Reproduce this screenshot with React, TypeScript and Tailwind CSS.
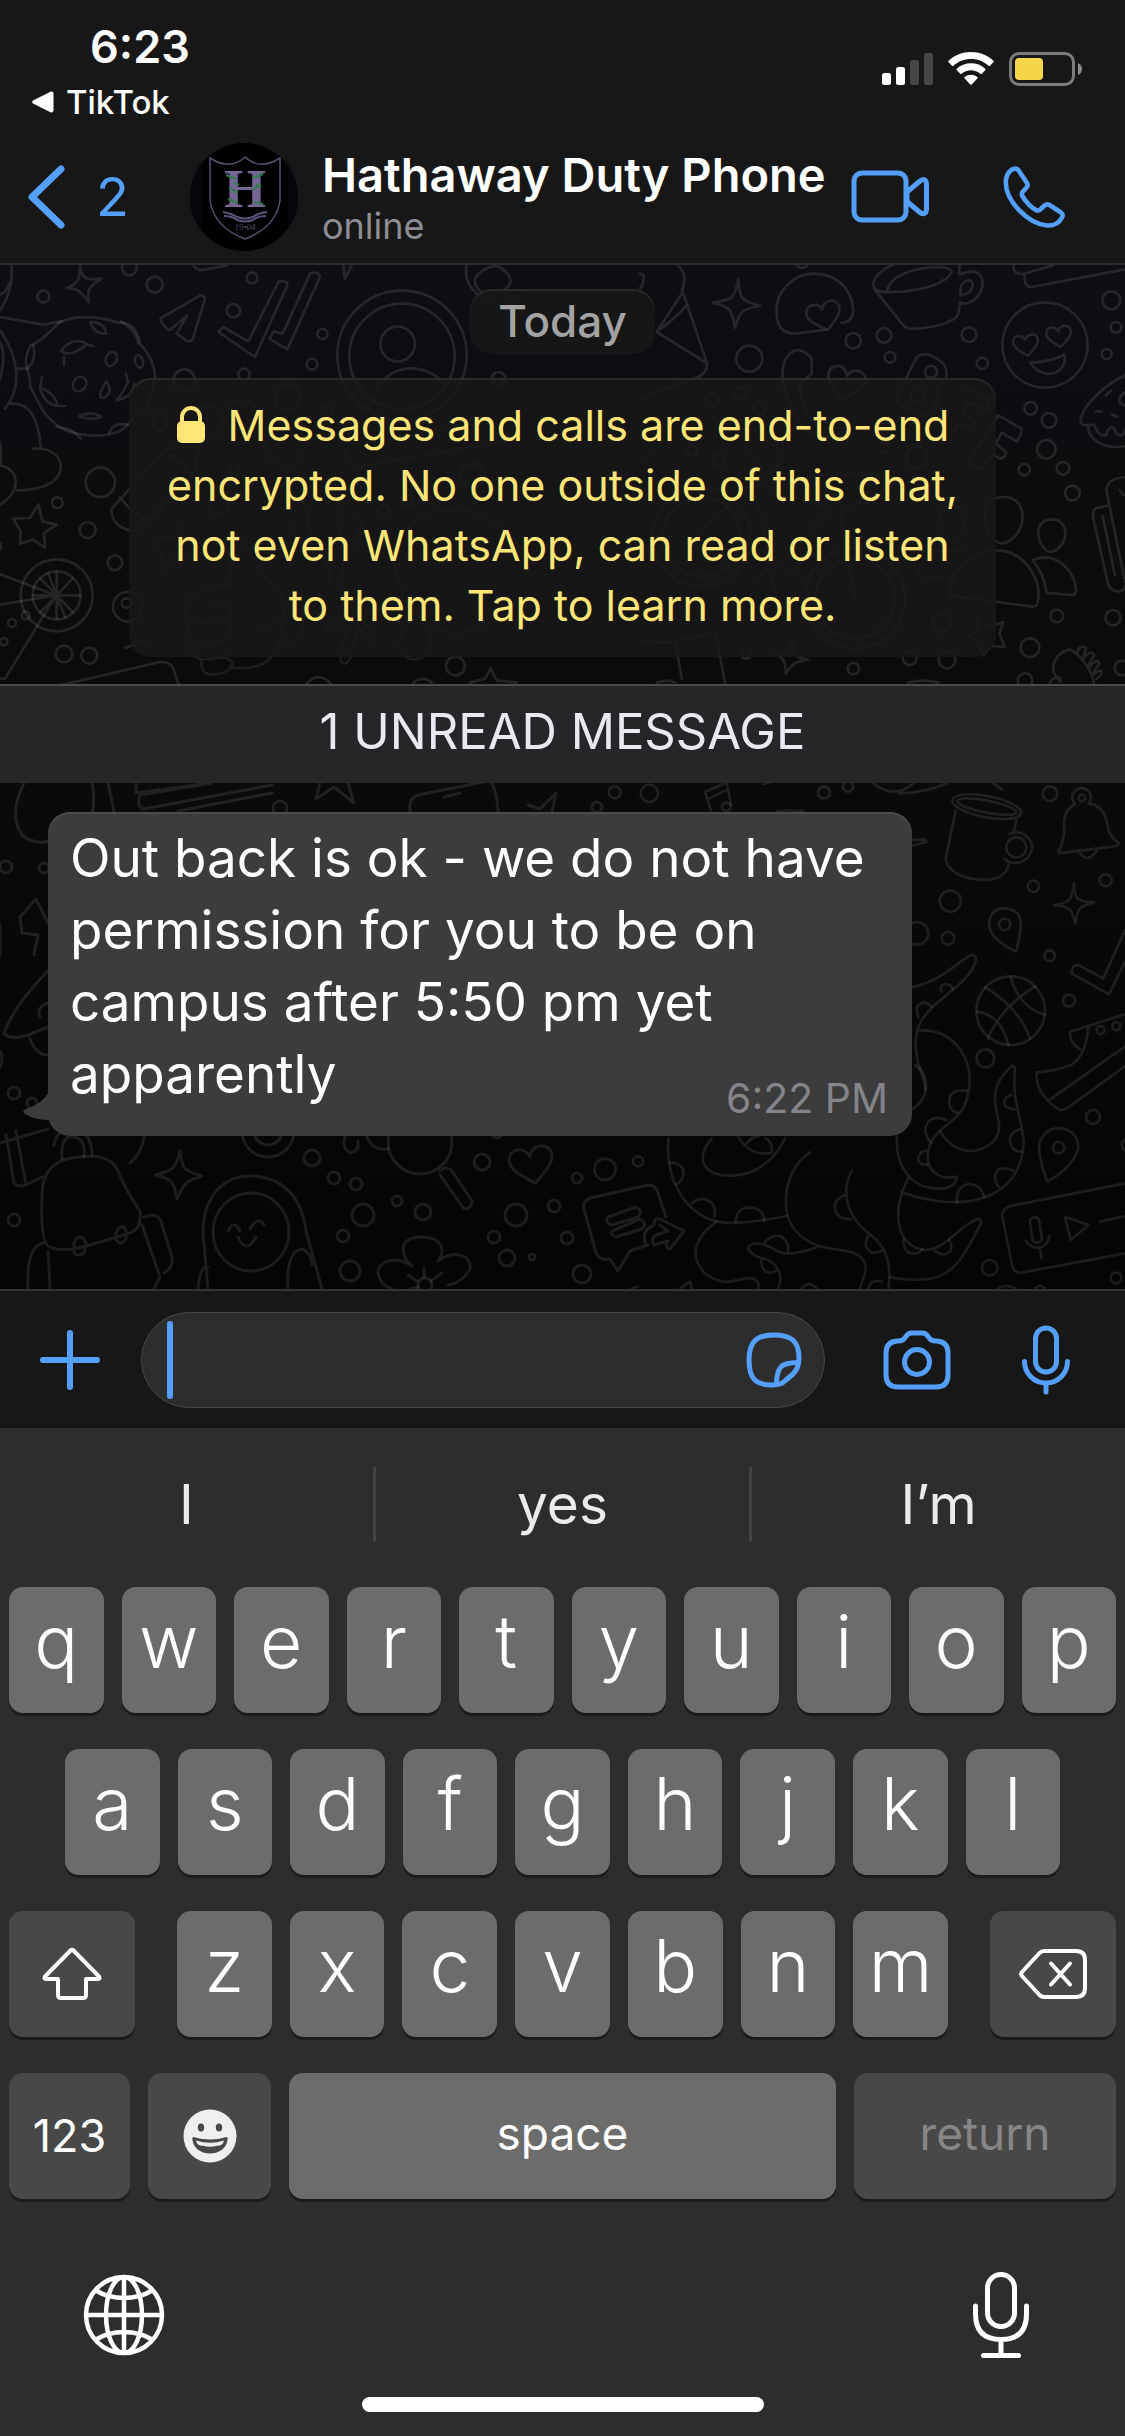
import React from "react";
import type { ReactNode } from "react";

type Ring = [number, number, number];

const ringsTopLeft: Ring[] = [
  [130, 104, 18], [388, 18, 22], [464, 68, 24], [756, 48, 16], [700, 146, 20], [967, 216, 15],
  [936, 307, 16], [732, 337, 17], [553, 354, 32], [862, 406, 38], [301, 661, 44], [172, 722, 16],
  [263, 804, 24], [345, 902, 22], [383, 1034, 44], [379, 1023, 14], [192, 1176, 25], [268, 1181, 24],
  [77, 1060, 12], [36, 1083, 12], [11, 1139, 11], [1366, 1212, 28], [480, 483, 24], [982, 446, 16],
  [1496, 350, 20], [702, 622, 15], [658, 728, 30], [1150, 745, 18], [-10, 853, 14], [1224, 716, 16],
  [1418, 640, 36], [1206, 280, 194], [1206, 283, 158], [1193, 246, 52], [170, 1000, 108], [170, 1000, 72],
];

const ringsTopRight: Ring[] = [
  [640, 236, 23], [732, 220, 22], [750, 286, 16], [987, 218, 22], [1027, 304, 17], [328, 290, 39],
  [1414, 115, 27], [1428, 196, 16], [1400, 276, 15], [1172, 439, 19], [1227, 475, 22], [1219, 562, 28],
  [1153, 623, 17], [1269, 619, 19], [1297, 693, 22], [1250, 1062, 19], [1419, 1067, 23], [1170, 1157, 28],
  [1155, 1255, 22], [1446, 1218, 22], [921, 1194, 25], [809, 1188, 21], [640, 1220, 17], [873, 330, 18],
  [834, 400, 22], [217, 411, 19], [301, 394, 16], [357, 441, 18], [157, 566, 15], [238, 592, 19],
  [733, 556, 15], [830, 585, 32], [905, 1083, 28], [318, 1174, 16], [185, 825, 148], [185, 825, 118],
  [645, 1010, 150], [645, 1010, 120], [1215, 249, 128], [486, 0, 18],
];

const ringsBottomRight: Ring[] = [
  [29, 37, 18], [133, 40, 26], [657, 38, 18], [729, 20, 15], [1335, 41, 22], [1431, 54, 10],
  [1285, 319, 17], [1502, 301, 18], [1036, 363, 32], [936, 460, 34], [1029, 475, 19], [1199, 433, 17],
  [1334, 527, 16], [1392, 662, 18], [1141, 835, 27], [1464, 1011, 21], [1361, 1103, 17], [99, 1144, 15],
  [0, 1168, 32], [1154, 1463, 23], [1533, 1494, 16], [1234, 202, 30], [1217, 692, 103], [1487, 750, 12],
  [1534, 738, 12], [1570, 1095, 20],
];

const ringsBottomLeft: Ring[] = [
  [280, 543, 7], [6, 602, 6], [44, 603, 5], [14, 828, 6], [32, 838, 5], [14, 955, 6], [312, 893, 8],
  [334, 913, 6], [356, 919, 6], [397, 936, 5], [363, 950, 11], [423, 947, 8], [343, 971, 6], [350, 1006, 10],
  [482, 897, 8], [577, 913, 5], [554, 941, 6], [516, 950, 11], [494, 972, 6], [567, 973, 6], [507, 993, 8],
  [532, 992, 3], [582, 1009, 9], [420, 877, 32], [268, 866, 26], [268, 866, 14], [597, 542, 5],
];

function Rings({ items }: { items: Ring[] }) {
  return (
    <>
      {items.map(([x, y, r]) => (
        <circle key={`${x}-${y}-${r}`} cx={x} cy={y} r={r} />
      ))}
    </>
  );
}

const HEART = "M0 44C-18 30 -52 8 -50 -16C-46 -44 -10 -44 -2 -18C8 -46 46 -42 48 -16C50 8 18 28 0 44Z";

function Wallpaper() {
  return (
    <svg
      aria-hidden="true"
      viewBox="0 0 1125 1024"
      preserveAspectRatio="xMidYMin slice"
      className="pointer-events-none absolute inset-0 h-full w-full"
      fill="none"
      stroke="#ffffff"
      strokeOpacity="0.105"
      strokeLinecap="round"
      strokeLinejoin="round"
    >
      <g transform="translate(0 -3) scale(.33333)" strokeWidth="8">
        <Rings items={ringsTopLeft} />
        <path d="M240 8C245 50 255 55 305 50C265 75 262 80 265 120C240 85 235 82 200 78C235 65 240 55 240 8Z" />
        <path d="M92 250C130 235 140 215 180 180C240 155 300 165 355 182C400 180 415 210 420 245C450 280 465 310 465 345C455 400 450 455 400 460C385 500 350 525 270 520C190 515 170 490 150 470C120 450 110 400 90 375C95 340 75 320 78 290C80 265 95 250 92 250Z" />
        <path d="M183 265Q210 230 250 240Q262 250 280 252M183 265Q200 285 240 262L258 250M192 310V285" />
        <path d="M270 180Q315 180 318 215Q285 218 270 180ZM362 178Q410 205 415 245M100 250Q110 290 85 318M120 375Q170 400 172 432Q130 425 120 375ZM172 432L195 432M120 375L126 345M170 495Q215 495 242 530M328 512Q340 480 384 488M238 462Q275 445 304 464Q270 478 238 462ZM378 335L384 360Q365 400 350 415Q400 405 402 365" />
        <ellipse cx="334" cy="291" rx="16" ry="22" transform="rotate(25 334 291)" />
        <ellipse cx="239" cy="366" rx="19" ry="23" transform="rotate(35 239 366)" />
        <ellipse cx="417" cy="298" rx="12" ry="19" transform="rotate(-15 417 298)" />
        <path d="M318 358Q340 385 318 404Q295 415 302 390Z" />
        <path d="M483 168L600 101Q615 98 614 114L578 232Q572 242 560 236L530 215L562 160L512 203Q500 205 485 180Q480 172 483 168Z" />
        <path d="M655 210L670 195L745 238L835 60Q862 52 862 70L765 285Z" />
        <path d="M808 230L822 208L848 215L930 35Q955 25 960 45L862 262Z" />
        <path d="M1122 415C1150 290 1290 300 1335 372M1030 8L1035 50L1056 8M580 8Q590 30 620 22L680 10" />
        <path d="M1400 10Q1390 60 1430 95L1490 130L1560 100M1425 50Q1440 20 1490 10Q1540 40 1530 65Q1500 110 1450 95Q1420 75 1425 50Z" />
        <path d="M115 727L127 778L170 788L132 813L135 856L98 833L60 845L62 808L40 770L90 768Z" />
        <path d="M170 930V1070M100 1000H240M122 950L218 1050M218 950L122 1050M145 935L195 1065M0 937L168 1000L0 1028M165 1005L15 1250H0" />
        <path d="M0 165L130 188L185 178M0 205C60 290 65 380 15 440M50 320H80M0 240Q20 280 0 350M30 425C90 420 115 470 122 555M98 560C160 555 185 590 182 620C175 670 110 685 50 685M0 610C60 620 65 690 0 728M0 540Q5 580 0 610M35 8Q40 90 0 145M30 60Q20 90 0 98" />
        <path d="M335 740L500 560L598 552L580 640L410 805C370 810 330 780 335 740ZM360 705Q400 760 440 775M500 570Q520 600 550 600Q560 640 580 640" />
        <path d="M375 1158L445 1133M395 1085L410 1145M180 1270L480 1200Q510 1198 520 1220L535 1265M920 1265Q955 1225 992 1265M1240 1262Q1270 1240 1296 1262M1410 1262L1455 1250L1472 1220L1490 1255L1550 1262" />
        <g strokeOpacity="0.07">
          <path d="M560 1080C550 1000 570 980 695 968C705 900 650 830 700 815C740 820 760 930 840 985C860 1050 850 1180 780 1210Q730 1225 690 1215M605 1195Q600 1240 640 1238Q700 1230 697 1200Q680 1180 640 1190M625 1028H675Q700 1045 685 1070Q660 1085 570 1078Q550 1110 580 1140Q640 1150 685 1130Q700 1100 680 1078M575 1145Q565 1180 600 1192Q660 1195 685 1165M850 1150Q920 1150 910 1060M760 1100Q810 1095 840 1060" />
          <path d="M920 740Q920 850 985 850Q1040 830 1020 740M1055 760Q1080 740 1082 780Q1070 880 1030 900L1025 960Q1010 980 990 960L980 890Q920 880 875 800Q880 780 895 790" />
          <path d="M1190 940C1150 850 1240 740 1350 745C1420 730 1540 800 1560 860M1190 940C1210 1030 1240 1060 1300 1100Q1400 1130 1480 1080M1380 900Q1400 830 1480 830M1240 1070Q1190 1120 1200 1160Q1230 1220 1290 1170Q1300 1130 1280 1100M980 1090L1060 1040L1130 1130Q1130 1150 1105 1140L1075 1090L1050 1190Q1030 1220 1020 1190L1040 1100L980 1110Z" />
          <path d="M800 540Q780 590 870 620Q930 560 920 520M1040 560Q1030 600 1070 615L1560 530M1060 550L1440 480M470 830L520 825L545 790L540 850L570 890L520 890L490 930L485 880L455 850Z" />
          <path d="M595 440Q650 410 670 470Q670 520 620 540M680 430Q740 390 780 450" />
        </g>
      </g>

      <g transform="translate(640 -3) scale(.33333)" strokeWidth="8">
        <Rings items={ringsTopRight} />
        <path d="M295 52C300 110 300 115 360 132C310 140 300 145 285 197C275 145 275 135 218 122C275 115 285 110 295 52Z" />
        <path d="M604 183Q640 180 640 145C635 70 580 35 520 35C460 35 405 90 410 150C410 190 425 215 465 215L555 204" />
        <path d={HEART} transform="translate(553 160) rotate(-14) scale(1.03)" />
        <path d="M700 65C700 40 740 15 760 8M700 65Q700 95 760 90C830 88 915 70 935 30Q930 15 890 15C820 18 750 40 742 85M702 80L790 190Q800 202 830 200C890 195 945 180 955 155L960 120M958 35V10M960 38C1030 5 1045 70 1010 105Q990 130 960 122M962 100V75C970 55 1000 45 998 70Q995 95 962 100Z" />
        <path d="M50 210L125 95Q145 35 115 12M50 210L195 300M125 80L200 300Q205 330 175 345L0 410M50 210Q130 150 142 125M0 80Q15 60 10 40L0 35" />
        <path d="M515 290Q490 260 465 265C420 285 420 350 440 400C460 470 520 560 600 510M515 290V335L480 365Q475 420 520 480" />
        <path d={HEART} transform="translate(618 362) rotate(14) scale(1.15)" />
        <path d="M830 285Q855 265 890 290C930 310 930 365 890 372C910 420 870 460 840 460L775 425Q765 415 770 405Z" />
        <path d="M970 370L1048 415Q1050 430 1038 445L985 420L970 450L1005 475L990 500L955 485L940 515" />
        <path d="M1075 460L1145 500Q1145 520 1130 538L1085 512L1068 545L1098 570Q1100 585 1080 590L1055 575L1025 620Q1000 620 985 600Z" />
        <path d={HEART} transform="translate(1159 248) rotate(-8) scale(.76)" strokeWidth="10" />
        <path d={HEART} transform="translate(1258 222) rotate(-8) scale(.76)" strokeWidth="10" />
        <path d="M1170 302C1200 302 1250 292 1273 277C1280 310 1260 335 1222 336Q1190 330 1170 302Z" />
        <path d="M1120 8Q1120 40 1150 36L1240 10M1155 40Q1150 77 1175 75L1455 22" />
        <path d="M1455 340C1390 370 1320 440 1322 480Q1325 495 1362 488Q1375 525 1398 520Q1412 475 1430 515Q1445 530 1455 505M1345 495C1345 530 1390 565 1455 552M1398 400L1412 386M1367 448H1384M1416 458L1432 464M1455 390Q1420 420 1455 430" />
        <path d="M1455 645Q1395 650 1400 690L1455 960M1408 730L1370 738Q1355 745 1360 770L1405 970Q1415 990 1440 988Q1455 985 1455 970M1388 762L1425 940M1440 685L1450 700" />
        <path d="M1148 765C1145 720 1120 705 1090 705C1050 705 1030 730 1033 765C1040 820 1070 844 1085 844C1110 844 1148 810 1148 765Z" />
        <path d="M1276 810C1272 780 1255 772 1235 772C1210 772 1194 790 1194 815C1198 850 1220 870 1232 870C1250 868 1278 845 1276 810Z" />
        <path d="M930 1000Q920 970 950 930C1030 840 1120 850 1170 920Q1205 970 1192 1025Q1188 1036 1175 1034Z" />
        <path d="M1178 895Q1210 880 1240 890C1290 910 1310 960 1308 990Q1305 1000 1290 999L1220 992Q1210 930 1178 895Z" />
        <path d="M1010 1060L1040 1098L1090 1080L1078 1115L1095 1155L1055 1152L1030 1180L1015 1140L985 1125L1015 1110Z" />
        <path d="M1262 1260Q1235 1235 1240 1210Q1250 1170 1290 1162Q1345 1195 1362 1262M1310 1175Q1320 1145 1338 1158L1330 1185M1330 1192Q1350 1160 1363 1180L1345 1210M1350 1215Q1370 1185 1378 1205L1358 1235M1362 1238Q1385 1215 1385 1235L1370 1252M1230 1262Q1240 1240 1262 1250" />
        <path d="M462 1130C455 1175 460 1185 503 1193C465 1200 455 1205 438 1235C435 1200 435 1190 400 1172C440 1175 450 1165 462 1130Z" />
        <path d="M0 1140L95 1142L210 1112Q225 1112 230 1130L255 1262M107 1142L125 1250M50 1262Q80 1250 105 1262M805 1262Q850 1250 895 1262" />
        <g strokeOpacity="0.07">
          <path d="M0 600L65 550M310 540Q320 590 350 590M370 530L440 580L340 690L400 900M180 810L340 660L570 740L430 900M600 720L520 640L700 635Q760 660 720 690L600 750L645 1010M895 780Q895 730 940 730Q985 740 975 780Q960 830 935 830Q900 820 895 780ZM830 940Q850 850 970 865M830 940L910 950M340 960L380 920L410 990M400 900Q470 960 480 900" />
        </g>
      </g>

      <g transform="translate(605 515) scale(.33333)" strokeWidth="8" strokeOpacity="0.095">
        <Rings items={ringsBottomRight} />
        <path d="M318 92L300 35L365 8L378 75M308 58L368 28" />
        <ellipse cx="364" cy="80" rx="13" ry="12" />
        <path d="M475 12L500 5M805 10Q870 60 925 10M880 40Q960 40 1025 10M1165 10L1192 28M515 95Q550 88 595 95M920 180L960 178L965 185L920 198" />
        <ellipse cx="1145" cy="80" rx="105" ry="32" transform="rotate(11 1145 80)" />
        <ellipse cx="1145" cy="80" rx="90" ry="18" transform="rotate(11 1145 80)" />
        <path d="M1052 92L1022 235C1030 290 1110 305 1160 298C1200 290 1212 265 1212 245M1235 120L1225 160M1212 162C1250 145 1285 175 1280 210C1270 250 1225 258 1200 238" />
        <path d="M1410 72A28 28 0 1 1 1453 68M1410 72C1380 90 1375 115 1378 150Q1375 190 1360 215Q1365 222 1400 215L1505 202Q1545 200 1540 188Q1510 170 1507 130Q1495 75 1450 70M1425 220Q1450 250 1475 212" />
        <path d="M1407 310C1410 360 1412 362 1468 368C1418 380 1418 385 1411 432C1400 385 1398 382 1348 375C1395 368 1400 362 1407 310Z" />
        <path d="M1233 515Q1150 475 1152 430Q1155 385 1200 385Q1250 390 1247 435Q1245 470 1233 515Z" />
        <path d="M1560 450L1495 595L1420 555Q1400 555 1400 580L1512 643L1560 545" />
        <path d="M1140 622Q1240 680 1275 775M1217 590Q1240 680 1320 705M1292 618Q1190 680 1148 775M1115 695Q1190 705 1210 795" />
        <path d="M920 622C1020 600 1060 540 1100 525Q1118 525 1110 550C1080 630 950 670 935 760C920 850 970 900 960 940Q950 970 920 990M938 752C1050 740 1120 850 1085 960C1060 1040 970 1040 968 1130C968 1180 1010 1200 1055 1190Q1055 1215 1020 1225C920 1235 870 1160 876 1070" />
        <path d="M1005 1055C1040 1105 1080 1120 1120 1110C1170 1095 1190 1060 1180 1020C1170 970 1150 920 1220 858Q1230 855 1230 870C1220 970 1250 1000 1256 1090C1250 1200 1180 1240 1130 1255C1060 1280 950 1260 888 1235M910 1195C860 1290 870 1400 960 1410C1020 1410 1060 1340 1115 1318Q1130 1315 1128 1330C1090 1400 1060 1480 980 1495Q920 1505 855 1492" />
        <path d="M1010 635Q1000 610 1028 613Q1042 615 1043 628M940 712Q925 670 960 668Q975 672 980 680M930 855Q970 880 962 930M1085 932Q1030 925 1033 970Q1035 995 1058 998M1025 1020Q970 1000 960 1050Q965 1075 978 1088M962 1112Q940 1115 940 1140Q945 1155 968 1155M1218 945Q1195 955 1198 970Q1200 985 1228 988M1245 1047Q1210 1060 1215 1085Q1220 1115 1250 1115M1225 1172Q1170 1150 1170 1195Q1170 1210 1182 1220M1055 1265Q1055 1215 1095 1212Q1130 1215 1137 1252M895 1378Q895 1425 930 1420Q945 1420 952 1408M990 1412Q1020 1435 1038 1410Q1042 1395 1032 1380" />
        <path d="M190 1075C180 1220 260 1340 400 1328Q460 1325 545 1308M320 1075C260 1150 310 1190 385 1187C450 1185 510 1140 540 1075M400 1072C430 1120 470 1125 500 1118Q505 1085 480 1075M425 1090Q440 1070 460 1070" />
        <path d="M195 1148Q240 1150 235 1185Q230 1205 215 1212M262 1268Q290 1245 320 1268Q335 1290 328 1310M392 1325Q395 1282 435 1282Q475 1285 478 1322M614 1117C540 1170 520 1290 570 1350C630 1420 700 1400 750 1420Q790 1440 780 1480L765 1525M335 1325C270 1370 250 1430 300 1480C360 1530 400 1490 440 1495Q465 1500 460 1525M640 1400Q560 1430 520 1415C480 1390 440 1380 428 1405Q440 1430 490 1440Q540 1470 520 1525M475 1392Q500 1360 530 1370Q555 1390 548 1415M470 1438Q465 1475 495 1478Q510 1478 515 1470" />
        <path d="M740 1173C700 1250 740 1320 790 1360C850 1400 860 1460 850 1525M722 1245Q685 1255 690 1290Q700 1320 740 1318M790 1368Q770 1400 800 1418Q820 1420 836 1410M590 1525Q610 1500 635 1525M790 1525Q800 1495 830 1505M80 1525L98 1520M225 1525L255 1505L260 1525M1180 1525Q1205 1510 1230 1525M1290 1525Q1305 1510 1320 1525" />
        <path d="M1560 703L1395 755C1395 790 1415 800 1425 808M1450 742Q1440 840 1390 858Q1340 875 1295 877C1290 930 1330 970 1365 990Q1380 992 1400 975L1560 858M1335 958L1560 800" />
        <path d="M1327 1205Q1295 1120 1305 1085Q1325 1040 1370 1045Q1420 1055 1420 1105Q1405 1160 1327 1205Z" />
        <path d="M1560 1210L1220 1277Q1190 1285 1192 1310L1222 1460Q1230 1480 1250 1478L1560 1420M1380 1310L1450 1335L1397 1380ZM1485 1325L1560 1308M1275 1325Q1275 1310 1292 1312Q1302 1315 1304 1330L1310 1370Q1312 1385 1298 1388Q1285 1388 1282 1375ZM1262 1382Q1275 1405 1305 1403Q1330 1395 1333 1368M1305 1405L1310 1435" />
      </g>

      <g strokeWidth="3" strokeOpacity="0.095">
        <Rings items={ringsBottomLeft} />
        <path d="M24 518Q8 550 22 570Q34 580 50 576M92 518Q98 548 84 562M108 518L114 546M136 518V528L210 518M140 530L212 518M140 530Q136 542 144 544L272 520M178 546L272 528M316 534L320 518M316 534L334 522L354 538L348 518" />
        <path d="M410 546Q408 534 418 530L488 516Q496 518 498 546M444 532L460 528M528 540L540 544L556 528L552 546" />
        <path d="M48 658L36 634L20 652L22 668L38 670L34 690M48 706Q14 740 4 768Q10 776 28 770L48 762M30 774Q36 790 48 790M0 660V690M48 738Q36 742 40 752M0 786Q4 794 0 802" />
        <path d="M0 878L48 864M6 870L14 918Q20 924 30 918L42 912M16 866L26 920M144 872Q142 888 130 898M54 880Q56 866 72 862Q92 866 92 890M62 894Q60 870 74 872Q86 874 84 892" />
        <path d="M42 930Q42 894 80 892Q110 888 118 906Q126 926 140 946Q142 964 130 968L90 980Q62 988 50 982Q40 980 42 930ZM48 986L50 1024M142 960L160 1012L154 1024M28 1024Q26 980 44 978M144 952Q160 946 162 960L172 992Q174 1002 164 1008M74 978Q80 966 86 978L84 988Q78 992 74 988ZM116 968Q122 956 126 966V974Q120 982 116 974Z" />
        <path d="M180 886C182 904 184 906 202 911C186 916 184 918 177 934C174 916 172 914 155 910C172 906 176 904 180 886Z" />
        <ellipse cx="251" cy="967" rx="38" ry="39" />
        <path d="M208 1024L204 980C198 930 226 910 252 911C282 912 302 932 306 966L322 1024M198 1024Q200 1000 208 1002M288 1024Q286 986 302 984Q312 988 312 1000M228 966Q234 954 240 966M250 964Q258 950 264 960M238 972Q246 990 256 972" />
        <path d="M440 906Q446 900 452 906L472 936Q472 944 464 944L440 910M350 862Q338 880 350 888Q360 886 358 876M366 870Q372 886 388 884M492 870Q496 876 502 870" />
        <path d={HEART} transform="translate(532 899) rotate(-10) scale(.44)" strokeWidth="7" />
        <path d="M412 1001C400 990 398 973 420 972C446 972 444 988 438 996M438 996C454 984 472 990 470 1004Q462 1018 448 1020M412 1001C396 990 378 996 378 1008Q380 1020 392 1024M424 1012V1004M417 1016L408 1010M431 1016L442 1008M418 1022L410 1024" />
        <circle cx="425" cy="1020" r="7" />
        <path d="M584 944Q582 936 590 933L648 920Q656 920 658 928L666 952M584 944L596 988Q600 996 610 994L618 1006L630 986L648 980M608 952L636 942Q644 946 638 952L612 960Q604 958 608 952ZM612 966L640 954Q648 958 642 964L616 972Q610 970 612 966ZM646 980Q640 966 654 960Q654 950 664 956L684 966L670 984Q664 982 668 976L654 980Q650 974 656 970L668 966L660 960" />
      </g>
    </svg>
  );
}

function StatusBar() {
  return (
    <div className="flex items-start justify-between pl-8 pr-[42px] pt-5">
      <div className="flex flex-col">
        <span className="pl-[58px] text-[45px] font-semibold leading-[54px] text-white">6:23</span>
        <a href="#tiktok" className="flex items-center gap-3 text-[33px] font-medium leading-[56px] text-white">
          <svg width="22" height="22" viewBox="0 0 22 22" fill="#fff" aria-hidden="true">
            <path d="M1 9.5 18.5 .8Q21.5 -.3 21.5 3v16q0 3.3-3 2.2L1 12.5q-1.6-1.5 0-3Z" />
          </svg>
          TikTok
        </a>
      </div>
      <div className="flex items-center gap-[15px] pt-8">
        <svg width="51" height="32" viewBox="0 0 51 32" aria-label="Signal" role="img">
          <rect x="0" y="20" width="9" height="12" rx="2.5" fill="#fff" />
          <rect x="14" y="14" width="9" height="18" rx="2.5" fill="#fff" />
          <rect x="28" y="7" width="9" height="25" rx="2.5" fill="#464646" />
          <rect x="42" y="0" width="9" height="32" rx="2.5" fill="#464646" />
        </svg>
        <svg width="46" height="34" viewBox="0 0 46 34" aria-label="Wi-Fi" role="img" fill="#fff">
          <path d="M23 0C14.5 0 6.5 3.3.6 8.8a1 1 0 0 0 0 1.5L4 13.7a1 1 0 0 0 1.4 0C10 9.5 16.2 7 23 7s13 2.5 17.6 6.7a1 1 0 0 0 1.4 0l3.4-3.4a1 1 0 0 0 0-1.5C39.5 3.3 31.5 0 23 0Z" />
          <path d="M23 11.3c-5.4 0-10.4 2-14.2 5.4a1 1 0 0 0 0 1.5l3.5 3.5a1 1 0 0 0 1.4 0c2.5-2.1 5.700-3.4 9.3-3.4s6.8 1.3 9.3 3.4a1 1 0 0 0 1.4 0l3.5-3.5a1 1 0 0 0 0-1.5A21.3 21.3 0 0 0 23 11.3Z" />
          <path d="M23 22.8c-2.4 0-4.6.8-6.3 2.2a1 1 0 0 0 0 1.6l5.6 5.9a1 1 0 0 0 1.4 0l5.6-5.9a1 1 0 0 0 0-1.6 10 10 0 0 0-6.3-2.2Z" />
        </svg>
        <svg width="74" height="34" viewBox="0 0 74 34" aria-label="Battery" role="img">
          <rect x="1.5" y="1.5" width="63" height="31" rx="8.5" fill="none" stroke="#7b7b7b" strokeWidth="3" />
          <rect x="6" y="6" width="28" height="22" rx="4" fill="#f7d54b" />
          <path d="M69 11q4 2 4 6t-4 6Z" fill="#8b8b8b" />
        </svg>
      </div>
    </div>
  );
}

function Crest() {
  return (
    <svg width="108" height="108" viewBox="0 0 108 108" className="shrink-0 rounded-full bg-black" role="img" aria-label="Hathaway crest">
      <path d="M0 0H12V108H0ZM98 0h10v108H98Z" fill="#07060d" />
      <path d="M20 15Q40 28 55 14Q70 28 90 15V58Q86 84 55 96Q24 84 20 58Z" fill="none" stroke="#57506f" strokeWidth="1.5" />
      <text x="55" y="64" textAnchor="middle" fontFamily="Liberation Serif, serif" fontWeight="700" fontSize="54" fill="#746695">
        H
      </text>
      <path d="M36 32l10 4M39 45l9 5M38 56l10 4M63 35l10-4M62 47l9-5M64 59l9 2M44 40l5 2M66 41l5 3" stroke="#2f7d4b" strokeWidth="2" />
      <path d="M33 69q10 2 14 5q8 3 16 0q5-4 14-5M34 73q8 0 13 4q8 3 16 0q5-4 13-4" fill="none" stroke="#5a5278" strokeWidth="2" />
      <text x="55" y="87" textAnchor="middle" fontFamily="Liberation Serif, serif" fontStyle="italic" fontSize="9" fill="#57506f">
        19•04
      </text>
    </svg>
  );
}

function ChatHeader() {
  return (
    <div className="flex flex-1 items-center pl-[26px] pr-[60px] text-[#549ff9]">
      <button type="button" aria-label="Back, 2 unread chats" className="flex w-[164px] shrink-0 items-center gap-[30px] text-[54px] leading-[64px]">
        <svg width="40" height="66" viewBox="0 0 40 66" fill="none" stroke="currentColor" strokeWidth="7" strokeLinecap="round" strokeLinejoin="round" aria-hidden="true">
          <path d="M35 5 6 33l29 28" />
        </svg>
        2
      </button>
      <Crest />
      <div className="flex min-w-0 flex-1 flex-col pl-6">
        <h1 className="truncate text-[47px] font-semibold leading-[58px] text-white">Hathaway Duty Phone</h1>
        <p className="text-[36px] leading-[44px] text-[#8e8d93]">online</p>
      </div>
      <button type="button" aria-label="Video call" className="shrink-0">
        <svg width="78" height="54" viewBox="0 0 78 54" fill="none" stroke="currentColor" strokeWidth="5" strokeLinejoin="round" aria-hidden="true">
          <rect x="3" y="3" width="52" height="47" rx="8" />
          <path d="M56 22 69 11Q75 7 75.5 14V39Q75 46 69 42.5L56 31.5Z" />
        </svg>
      </button>
      <button type="button" aria-label="Voice call" className="ml-[74px] shrink-0">
        <svg width="62" height="62" viewBox="0 0 62 62" fill="none" stroke="currentColor" strokeWidth="4.6" strokeLinejoin="round" aria-hidden="true">
          <path d="M15.5 4.2 24 17Q25.5 19.5 23.5 21.5L19.5 26Q18.3 27.5 19.3 30C23 36 28 41.5 33.5 44.3Q35.5 45 37.3 43.5L41.5 39.5Q44 37.5 46.5 39L58 46.5Q60.5 48.5 59 51.5Q54.5 60 44 59.5C25 58 3 35 2.8 17Q2.6 8 8.5 3.8Q12.5 1.2 15.5 4.2Z" />
        </svg>
      </button>
    </div>
  );
}

function Conversation() {
  return (
    <main className="relative flex flex-1 flex-col items-stretch overflow-hidden bg-gradient-to-b from-[#0e0e13] via-[#0a0a0a] to-[#050505] pb-[152px] pt-6">
      <Wallpaper />
      <div className="relative self-center rounded-[22px] bg-[#171717]/90 px-7 text-[44px] font-medium leading-[65px] text-[#a3a3a3] shadow-[inset_0_2px_0_#2a2a2a]">
        Today
      </div>
      <button
        type="button"
        className="relative mx-[129px] mt-6 rounded-[22px] bg-[#191919]/85 px-[30px] pb-[22px] pt-[17px] text-center text-[43px] leading-[60px] text-[#fee577] shadow-[inset_0_2px_0_#2a2a2a]"
      >
        <svg width="30" height="38" viewBox="0 0 30 38" aria-hidden="true" className="mr-[22px] inline-block align-[-3px]">
          <path d="M6 16V11a9 9 0 0 1 18 0v5" fill="none" stroke="#fee577" strokeWidth="4" />
          <rect x="1" y="15" width="28" height="22" rx="5" fill="#fee577" />
        </svg>
        Messages and calls are end-to-end encrypted. No one outside of this chat, not even WhatsApp, can read or listen to them. Tap to learn more.
      </button>
      <div className="relative mt-[27px] border-t-2 border-[#4b4b4c] bg-[#262628] pb-[6px] text-center text-[49px] leading-[91px] text-[#e9e9f2]">
        1 UNREAD MESSAGE
      </div>
      <div className="relative ml-12 mt-[29px] flow-root w-[864px] max-w-[80%] rounded-[22px] bg-[#3c3c3c] pb-[14px] pl-[22px] pr-6 pt-[10px] text-[53px] leading-[72px] text-white shadow-[inset_0_2px_0_#4c4c4c]">
        <svg width="30" height="34" viewBox="0 0 30 34" aria-hidden="true" className="absolute -left-[25px] bottom-[12px]" fill="#3c3c3c">
          <path d="M27 0Q20 14 3 19Q-2 21 2 24Q12 30 27 30Z" />
        </svg>
        <span>
          Out back is ok - we do not have permission for you to be on campus after 5:50 pm yet apparently
        </span>
        <time className="float-right mt-9 text-[41px] leading-[48px] text-[#85848a]">6:22 PM</time>
      </div>
    </main>
  );
}

function Composer() {
  return (
    <form className="flex h-[139px] shrink-0 items-center border-t-2 border-[#333333] bg-[#171717] pl-10 pr-[54px] text-[#549ff9]">
      <button type="button" aria-label="Attach" className="shrink-0">
        <svg width="60" height="60" viewBox="0 0 60 60" stroke="currentColor" strokeWidth="6" strokeLinecap="round" aria-hidden="true">
          <path d="M30 3v54M3 30h54" />
        </svg>
      </button>
      <div className="ml-[41px] flex h-24 min-w-0 flex-1 items-center rounded-full border border-[#484848] bg-[#2d2d2d] pl-[25px] pr-[22px]">
        <span className="h-[78px] w-[6px] shrink-0 rounded-full bg-[#549ff9]" />
        <input type="text" aria-label="Message" className="h-full min-w-0 flex-1 bg-transparent px-2 text-[48px] text-white outline-none" />
        <button type="button" aria-label="Stickers" className="shrink-0">
          <svg width="56" height="56" viewBox="0 0 56 56" fill="none" stroke="currentColor" strokeWidth="5" strokeLinecap="round" strokeLinejoin="round" aria-hidden="true">
            <path d="M53 26C53 9 45 3 28 3S3 9 3 28s7 25 23 25c7 0 10-1 14-5l7-6c4-4 6-8 6-16Z" />
            <path d="M51 30.5C37 31 31 33 30.5 51" />
          </svg>
        </button>
      </div>
      <button type="button" aria-label="Camera" className="ml-[58px] shrink-0">
        <svg width="68" height="60" viewBox="0 0 68 60" fill="none" stroke="currentColor" strokeWidth="5" strokeLinejoin="round" aria-hidden="true">
          <path d="M14 11Q20 11.5 22.5 7Q25 3 28.5 3h11Q43 3 45.5 7Q48 11.5 54 11Q65 12 65 23V45Q65 57 53 57H15Q3 57 3 45V23Q3 12 14 11Z" />
          <circle cx="34" cy="32" r="12.5" />
        </svg>
      </button>
      <button type="button" aria-label="Record voice message" className="ml-[70px] shrink-0">
        <svg width="50" height="70" viewBox="0 0 50 70" fill="none" stroke="currentColor" strokeWidth="5" strokeLinecap="round" aria-hidden="true">
          <rect x="14.5" y="3" width="21" height="44" rx="10.5" />
          <path d="M3.5 36.5a21.5 21.5 0 0 0 43 0M25 58v9" />
        </svg>
      </button>
    </form>
  );
}

function LetterKey({ label }: { label: string }) {
  return (
    <button
      type="button"
      className="h-[126px] min-w-0 flex-1 rounded-[14px] bg-[#6c6c6c] pb-4 text-center text-[73px] font-light leading-[110px] text-white shadow-[0_3px_0_#1b1b1b]"
    >
      {label}
    </button>
  );
}

function DarkKey({ label, className, children }: { label: string; className: string; children: ReactNode }) {
  return (
    <button
      type="button"
      aria-label={label}
      className={`flex h-[126px] shrink-0 items-center justify-center rounded-[14px] bg-[#484848] text-white shadow-[0_3px_0_#1b1b1b] ${className}`}
    >
      {children}
    </button>
  );
}

function Keyboard() {
  return (
    <section aria-label="Keyboard" className="flex shrink-0 flex-col bg-[#2d2d2d] pt-[39px]">
      <div className="flex text-center text-[55px] leading-[75px] text-[#ebebeb]">
        <button type="button" className="flex-1">I</button>
        <button type="button" className="flex-1 border-x-[3px] border-[#434343]">yes</button>
        <button type="button" className="flex-1">I’m</button>
      </div>
      <div className="mt-[45px] flex flex-col gap-9 px-[9px]">
        <div className="flex gap-[18px]">
          {"qwertyuiop".split("").map((k) => <LetterKey key={k} label={k} />)}
        </div>
        <div className="flex gap-[18px] px-14">
          {"asdfghjkl".split("").map((k) => <LetterKey key={k} label={k} />)}
        </div>
        <div className="flex gap-[42px]">
          <DarkKey label="Shift" className="w-[126px]">
            <svg width="60" height="54" viewBox="0 0 60 54" fill="none" stroke="currentColor" strokeWidth="4" strokeLinejoin="round" aria-hidden="true">
              <path d="M28.5 3.5Q30 2 31.5 3.5L57 29.5Q58.5 32 55.5 32H44V48Q44 51 41 51H19Q16 51 16 48V32H4.500Q1.5 32 3 29.5Z" />
            </svg>
          </DarkKey>
          <div className="flex min-w-0 flex-1 gap-[18px]">
            {"zxcvbnm".split("").map((k) => <LetterKey key={k} label={k} />)}
          </div>
          <DarkKey label="Delete" className="w-[126px]">
            <svg width="68" height="50" viewBox="0 0 68 50" fill="none" stroke="currentColor" strokeWidth="4" strokeLinecap="round" strokeLinejoin="round" aria-hidden="true">
              <path d="M25.5 2H57q9 0 9 9V39q0 9-9 9H25.5q-3 0-5-2L3 27Q1 25 3 23L20.5 4q2-2 5-2Z" />
              <path d="M32 14.500 51 35.5M51 14.5 32 35.5" />
            </svg>
          </DarkKey>
        </div>
        <div className="flex gap-[18px]">
          <DarkKey label="Numbers" className="w-[121px] text-[45px]">123</DarkKey>
          <DarkKey label="Emoji" className="w-[123px]">
            <svg width="54" height="54" viewBox="0 0 54 54" aria-hidden="true">
              <circle cx="27" cy="27" r="26.5" fill="#efefef" />
              <ellipse cx="18" cy="18.5" rx="3.2" ry="4" fill="#484848" />
              <ellipse cx="36" cy="18.5" rx="3.2" ry="4" fill="#484848" />
              <path d="M10.5 28Q27 33 43.5 28Q45 28 44.5 31C42 49 12 49 9.5 31Q9 28 10.5 28Z" fill="#484848" />
              <path d="M13 31.5Q27 36 41 31.5Q40 37 34 36.8Q27 38.5 20 36.8Q14 37 13 31.5Z" fill="#efefef" />
            </svg>
          </DarkKey>
          <button type="button" className="h-[126px] min-w-0 flex-1 rounded-[14px] bg-[#6c6c6c] pb-[6px] text-center text-[46px] leading-[120px] text-white shadow-[0_3px_0_#1b1b1b]">
            space
          </button>
          <DarkKey label="Return" className="w-[262px] pb-[6px] text-[46px]">
            <span className="text-[#868686]">return</span>
          </DarkKey>
        </div>
      </div>
      <div className="flex items-center justify-between pl-[82px] pr-[94px] pt-[72px] text-white">
        <button type="button" aria-label="Next keyboard">
          <svg width="84" height="84" viewBox="0 0 84 84" fill="none" stroke="currentColor" strokeWidth="4.5" aria-hidden="true">
            <circle cx="42" cy="42" r="38" />
            <ellipse cx="42" cy="42" rx="18" ry="38" />
            <path d="M42 4v76M4 42h76M14 17.5Q26 25 42 25t28-7.5M14 66.5Q26 59 42 59t28 7.5" />
          </svg>
        </button>
        <button type="button" aria-label="Dictation">
          <svg width="60" height="88" viewBox="0 0 60 88" fill="none" stroke="currentColor" strokeWidth="5" strokeLinecap="round" aria-hidden="true">
            <rect x="16.5" y="3.5" width="27" height="52" rx="13.5" />
            <path d="M4.5 35v8Q4.5 68.5 30 68.5T55.5 43V35M30 69v15M12.5 84.5h35" />
          </svg>
        </button>
      </div>
      <div className="mx-auto mb-6 mt-[38px] h-[15px] w-[402px] rounded-full bg-white" />
    </section>
  );
}

export default function App() {
  return (
    <div className="flex min-h-screen w-full flex-col bg-[#171717] font-['Inter','Liberation_Sans',sans-serif]">
      <header className="flex h-[265px] shrink-0 flex-col border-b-2 border-[#2c2c2d]">
        <StatusBar />
        <ChatHeader />
      </header>
      <Conversation />
      <Composer />
      <Keyboard />
    </div>
  );
}
